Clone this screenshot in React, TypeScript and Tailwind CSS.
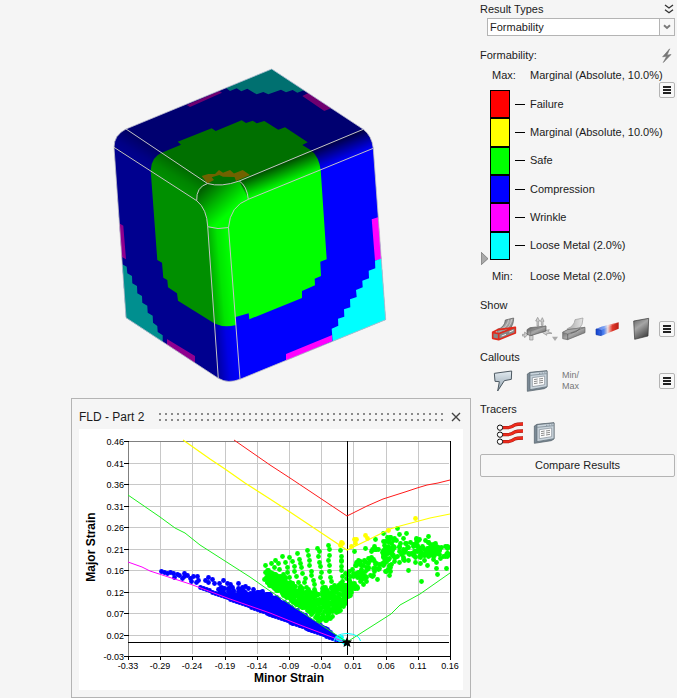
import type { ReactNode } from "react";

type Pt = [number, number];

const legend = [
  { label: "Failure", cell: "bg-[#ff0000]" },
  { label: "Marginal (Absolute, 10.0%)", cell: "bg-[#ffff00]" },
  { label: "Safe", cell: "bg-[#00ff00]" },
  { label: "Compression", cell: "bg-[#0000ff]" },
  { label: "Wrinkle", cell: "bg-[#ff00ff]" },
  { label: "Loose Metal (2.0%)", cell: "bg-[#00ffff]" },
];

/* ---------- 3D part ---------- */

const BODY =
  "M271.7 69L363.3 129.3Q372 136 373.3 148.3L385.7 319.7L240 379.3Q228 384 218.3 378.3L126 317.7L114 147.3Q114 135 126 129Z";

function PartView() {
  return (
    <svg viewBox="100 60 300 330" className="h-[330px] w-[300px]" role="img" aria-label="Formability result on part">
      <defs>
        <clipPath id="body">
          <path d={BODY} />
        </clipPath>
        <linearGradient id="rightBand" gradientUnits="userSpaceOnUse" x1="300" y1="155" x2="308" y2="175">
          <stop offset="0" stopColor="#000" stopOpacity="0.74" />
          <stop offset="0.35" stopColor="#000" stopOpacity="0.48" />
          <stop offset="1" stopColor="#000" stopOpacity="0" />
        </linearGradient>
        <linearGradient id="leftBand" gradientUnits="userSpaceOnUse" x1="167" y1="156" x2="156" y2="174">
          <stop offset="0" stopColor="#000" stopOpacity="0.6" />
          <stop offset="0.6" stopColor="#000" stopOpacity="0.48" />
          <stop offset="1" stopColor="#000" stopOpacity="0.44" />
        </linearGradient>
        <linearGradient id="frontBand" gradientUnits="userSpaceOnUse" x1="212" y1="300" x2="234" y2="298">
          <stop offset="0" stopColor="#000" stopOpacity="0.36" />
          <stop offset="0.5" stopColor="#000" stopOpacity="0.1" />
          <stop offset="1" stopColor="#000" stopOpacity="0" />
        </linearGradient>
        <linearGradient id="corner" gradientUnits="userSpaceOnUse" x1="206" y1="186" x2="230" y2="212">
          <stop offset="0" stopColor="#000" stopOpacity="0.62" />
          <stop offset="0.5" stopColor="#000" stopOpacity="0.3" />
          <stop offset="1" stopColor="#000" stopOpacity="0" />
        </linearGradient>
      </defs>
      <g clipPath="url(#body)">
        <rect x="100" y="60" width="300" height="330" fill="#00f" />
        <path
          fill="#0f0"
          d="M161.7 152.7L181 144.7L177.7 141.7L211.7 128.3L215.7 131L241.7 120.3L246 123L252.7 120.7L256.7 123.3L264.3 121L278.3 129.7L285 127.3L307.7 142.3L302.3 145L311.7 150.7Q319 157 320.7 170L326.7 259.3L320.3 261.7L321 276L314.7 278.7L315 285.3L302 291V298L249.3 319.3L248.7 313.3L235.6 317L236 325Q224 328 214.5 323.5L178 300.7L177 293.3L168 287.3L167.3 280L163.3 277.7L162 262.7L157.3 260L150.7 170.7Q151 157 161.7 152.7Z"
        />
        <path fill="#ffe000" d="M201.7 176L208.3 174H215L219 170L223 172.7L230 170L234 173.5L242.7 170L250 175L236 181L234.5 177L223 176.7L219.3 175L211.7 177.3L214 180L207.5 183.5Z" />
        <path fill="#f0f" d="M186.7 105L219.3 91L222 92.7L190 107ZM302.3 96L308.3 93L331 108.3L324.3 111ZM371.7 219.3L378.7 217L381.7 259L375 260.7ZM286 354L332.3 335V341L286 361ZM118 222.5L123.3 225.7L126 259.3L120 256ZM167 339L195 356V363L167 345.3Z" />
        <path fill="#0ff" d="M226 88L230 91L236.7 88.3L241.3 91.3L247.3 88.7L256.7 94.3L263.3 92L268.3 94.3L281 89.7L286 92.3L292.7 90L297.3 92.7L304 90.3L271.7 68Z" />
        <path fill="#0ff" d="M375 260.7L383 258L387 320L332.7 342L331.7 328.7L338.3 325.7L338 318.7L344.3 316.7L344 309.3L350.3 307.3L350 299.3L356.7 297L356 290L362.7 287.3L362.3 280.7L369 278.3L368.7 270.7L375.3 268.3Z" />
        <path fill="#0ff" d="M121 263.5L126.7 266.7L127.3 273.3L132 276L132.3 283.3L137 286L137.3 293.3L142 296L142.3 302.7L147.3 305.7L147.7 312.7L152.7 315.7L153 322.7L157.3 326L157.7 332L162.7 335.3V343L124 317.7Z" />
        <path fillOpacity="0.56" d="M126 129L271.7 69L363.3 129.3L239.3 181Q221 188 207.5 183.5Z" />
        <path fillOpacity="0.44" d="M110 144L196.7 200.7Q207 209 207.7 226.7L218.3 382L120 320Z" />
        <path fill="url(#rightBand)" d="M363.3 129.3L376 136V147.3L248.3 199.3L239.3 181Z" />
        <path fill="url(#leftBand)" d="M126 129L207.5 183.5Q197 188 196.7 200.7L110 144.7V129Z" />
        <path fill="url(#frontBand)" d="M207.7 226.7Q218 230 228.5 227.5L240 385H218.3Z" />
        <path fill="url(#corner)" d="M207.5 183.5Q221 188 239.3 181Q247 186 248.3 199.3Q232 204 228.5 227.5Q218 230 207.7 226.7Q207 209 196.7 200.7Q197 188 207.5 183.5Z" />
      </g>
      <g fill="none" stroke="#c4c4c4">
        <path strokeOpacity="0.8" d={BODY} />
        <path d="M126 129L207.5 183.5Q221 187.500 239.3 181L363.3 129.3M114 147.3L196.7 200.7Q207 209 207.7 226.7L218.3 378.3M228.500 227.5L240 379.3M373.3 148.3L248.3 199.3Q230 206 228.500 227.5Q218 230 207.7 226.7M207.5 183.5Q196 187 196.7 200.7M239.3 181Q247 186 248.3 199.3" />
      </g>
    </svg>
  );
}

/* ---------- forming limit diagram ---------- */

const yTicks = ["0.46", "0.41", "0.36", "0.31", "0.26", "0.21", "0.16", "0.12", "0.07", "0.02", "-0.03"];
const xTicks = ["-0.33", "-0.29", "-0.24", "-0.19", "-0.14", "-0.09", "-0.04", "0.01", "0.06", "0.11", "0.16"];
const yAt = (i: number) => Math.round(441 + i * 21.5);
const xAt = (i: number) => Math.round(128 + i * 32.2);

function makeRandom(seed: number) {
  let s = seed;
  return () => {
    s = (s * 1664525 + 1013904223) % 4294967296;
    return s / 4294967296;
  };
}

function levelAt(line: Pt[], x: number) {
  for (let i = 1; i < line.length; i++) {
    if (x <= line[i][0]) {
      const [x0, y0] = line[i - 1];
      const [x1, y1] = line[i];
      return y0 + ((y1 - y0) * (x - x0)) / (x1 - x0);
    }
  }
  return line[line.length - 1][1];
}

function safePoints(): Pt[] {
  const rnd = makeRandom(42);
  const pts: Pt[] = [];
  const tops: Pt[] = [
    [265, 566], [271, 562], [276, 559], [282, 557], [290, 556], [298, 553], [307, 550], [317, 547], [328, 545], [341, 550],
  ];
  const feet: Pt[] = [
    [277, 590], [286, 594], [293, 598], [300, 602], [306, 607], [312, 611], [319, 614], [326, 616], [333, 612], [342, 601],
  ];
  tops.forEach(([tx, ty], k) => {
    const [fx, fy] = feet[k];
    const steps = Math.round((fy - ty) / 5);
    for (let i = 0; i <= steps; i++) {
      const t = i / steps;
      pts.push([tx + (fx - tx) * t + rnd() * 2 - 1, ty + (fy - ty) * t + rnd() * 2 - 1]);
    }
  });
  const upperLeft: Pt[] = [[263, 567], [272, 572], [285, 577], [300, 585], [315, 589], [330, 586], [347, 580]];
  const lowerLeft: Pt[] = [[263, 578], [270, 586], [290, 600], [318, 620], [326, 621], [336, 614], [347, 602]];
  for (let i = 0; i < 420; i++) {
    const x = 264 + rnd() * 83;
    const a = levelAt(upperLeft, x);
    const b = levelAt(lowerLeft, x);
    pts.push([x, a + (b - a) * Math.pow(rnd(), 0.8)]);
  }
  const upperMid: Pt[] = [[343, 572], [352, 562], [362, 554], [372, 546], [383, 536], [397, 531]];
  const lowerMid: Pt[] = [[343, 602], [352, 593], [362, 586], [372, 582], [383, 576], [397, 569]];
  for (let i = 0; i < 130; i++) {
    const x = 343 + 48 * Math.pow(rnd(), 1.2);
    const a = levelAt(upperMid, x);
    const b = levelAt(lowerMid, x);
    pts.push([x, a + (b - a) * (0.06 + 0.94 * rnd())]);
  }
  const upperRight: Pt[] = [[382, 539], [397, 532], [410, 534], [430, 536], [450, 547]];
  const lowerRight: Pt[] = [[382, 574], [397, 570], [410, 567], [430, 562], [450, 559]];
  for (let i = 0; i < 150; i++) {
    const x = 382 + rnd() * 66;
    const a = levelAt(upperRight, x);
    const b = levelAt(lowerRight, x);
    const spread = (rnd() + rnd()) / 2;
    pts.push([x, a + (b - a) * spread]);
  }
  const singles: Pt[] = [
    [421, 581], [437, 574], [446, 568], [436, 568], [408, 570], [406, 533], [397, 528], [383, 533], [375, 539], [365, 548],
    [428, 536], [418, 540], [389, 575], [436, 562], [427, 565], [354, 551], [341, 560], [390, 567],
  ];
  return pts.concat(singles);
}

function compressionPoints(): Pt[] {
  const rnd = makeRandom(7);
  const pts: Pt[] = [
    [161, 571], [164, 572], [167, 573], [170, 572], [173, 573], [177, 574], [174, 577], [179, 575], [184, 573], [182, 578],
    [187, 575], [191, 581], [193, 576], [197, 576], [198, 580], [196, 582], [190, 578], [184, 576], [205, 580], [208, 577],
    [212, 579], [214, 583], [208, 582], [219, 583], [223, 580], [227, 583], [230, 584], [228, 588], [232, 587], [238, 583],
    [242, 587], [240, 590], [245, 586], [248, 588], [245, 592], [253, 589], [257, 592], [262, 591], [260, 595], [267, 594], [270, 594],
  ];
  for (let x = 200; x < 341; x += 3) pts.push([x, 587 + (x - 200) * 0.385]);
  const upper: Pt[] = [[215, 586], [238, 588], [262, 592], [272, 594], [300, 611], [343, 640]];
  const lower: Pt[] = [[215, 592], [238, 601], [270, 614], [300, 626], [343, 641]];
  for (let i = 0; i < 260; i++) {
    const x = 218 + rnd() * 112;
    const a = levelAt(upper, x);
    const b = levelAt(lower, x);
    pts.push([x, a + (b - a) * rnd()]);
  }
  return pts;
}

const safe = safePoints();
const compression = compressionPoints();
const marginal: Pt[] = [
  [341, 542], [340, 545], [342, 543], [356, 539], [354, 539], [355, 543], [351, 546], [365, 535], [367, 538], [388, 530], [415, 518],
];
const loose: Pt[] = [[337, 638], [340, 640], [343, 641], [345, 643], [341, 637]];

function Dots({ pts, color }: { pts: Pt[]; color: string }) {
  return (
    <g fill={color}>
      {pts.map(([x, y], i) => (
        <circle key={i} cx={Math.round(x) + 0.5} cy={Math.round(y) + 0.5} r="2.4" />
      ))}
    </g>
  );
}

function StrainChart() {
  return (
    <svg viewBox="79 429 384 261" className="block w-full bg-white font-['Liberation_Sans',sans-serif]" role="img" aria-label="Forming limit diagram">
      <g stroke="#c8c8c8" shapeRendering="crispEdges">
        {yTicks.map((t, i) => (
          <line key={t} x1="128" x2="449" y1={yAt(i) + 0.5} y2={yAt(i) + 0.5} />
        ))}
        {xTicks.map((t, i) => (
          <line key={t} y1="441" y2="654" x1={xAt(i) + 0.5} x2={xAt(i) + 0.5} />
        ))}
      </g>
      <Dots pts={safe} color="#00ff00" />
      <path fill="#0000ff" d="M235 593L262 592L275 596L300 611L346 641L332 638L270 615L235 600Z" />
      <Dots pts={compression} color="#0000ff" />
      <Dots pts={loose} color="#00ffff" />
      <Dots pts={marginal} color="#ffff00" />
      <g shapeRendering="crispEdges" fill="none">
        <path stroke="#808080" d="M128.500 656V441.500H450" />
        <path stroke="#000" d="M450.500 441V657M128 656.500H451M347.500 441V655M128 642.500H449" />
        {yTicks.map((t, i) => (
          <line key={t} x1="124" x2="129" y1={yAt(i) + 0.5} y2={yAt(i) + 0.5} stroke="#000" />
        ))}
        {xTicks.map((t, i) => (
          <line key={t} y1="656" y2="660" x1={xAt(i) + 0.5} x2={xAt(i) + 0.5} stroke="#000" />
        ))}
      </g>
      <g fill="none">
        <path stroke="#ff1a1a" d="M234 440L270 465L290 478L347 516L367 506L383 499L405 492L417 488L427 485L438 483L450 480" />
        <path stroke="#ff0" strokeWidth="1.2" d="M183 440L210 459L225 469L245 483L270 499L290 512L317 530L347 550L368 540L390 529L400 526L430 518L450 514" />
        <path stroke="#1ef01e" d="M128 495L160 517L175 528L185 533L200 545L250 577L270 591L347 642L391 614L400 605L420 594L450 573" />
        <path stroke="#f0f" d="M128 562L142 567L150 571L190 584L230 599L270 613L300 625L345 642" />
      </g>
      <path fill="none" stroke="#0ff" d="M334 641Q334 634 347 633.500Q359 634 360.500 641M335 637L346 642" />
      <path fill="#000" d="M347 637L348.500 640.500H352L349.500 643L350.500 647L347 645L343.500 647L344.500 643L342 640.500H345.500Z" />
      <g fontSize="9" fill="#000">
        {yTicks.map((t, i) => (
          <text key={t} x="124" y={yAt(i) + 4} textAnchor="end">
            {t}
          </text>
        ))}
        {xTicks.map((t, i) => (
          <text key={t} x={xAt(i)} y="669" textAnchor="middle">
            {t}
          </text>
        ))}
      </g>
      <g fontSize="12" fontWeight="700" textAnchor="middle">
        <text x="289" y="682">
          Minor Strain
        </text>
        <text transform="translate(95 547) rotate(-90)">Major Strain</text>
      </g>
    </svg>
  );
}

/* ---------- icons ---------- */

function Glyph({ box, className, children }: { box: string; className: string; children: ReactNode }) {
  return (
    <svg viewBox={box} className={"shrink-0 " + className} aria-hidden="true">
      {children}
    </svg>
  );
}

function Shades() {
  return (
    <svg className="absolute size-0" aria-hidden="true">
      <defs>
        <linearGradient id="steel" x1="0" y1="0" x2="1" y2="1">
          <stop offset="0" stopColor="#4a4a4a" />
          <stop offset="0.5" stopColor="#a8a8a8" />
          <stop offset="1" stopColor="#4c4c4c" />
        </linearGradient>
        <linearGradient id="pale" x1="0" y1="0" x2="1" y2="0">
          <stop offset="0" stopColor="#a8a8a8" />
          <stop offset="1" stopColor="#e4e4e4" />
        </linearGradient>
        <linearGradient id="plate" x1="0" y1="0" x2="0.5" y2="1">
          <stop offset="0" stopColor="#606060" />
          <stop offset="0.45" stopColor="#a6a6a6" />
          <stop offset="1" stopColor="#4a4a4a" />
        </linearGradient>
        <linearGradient id="heat" x1="0" y1="0" x2="1" y2="0">
          <stop offset="0" stopColor="#0f3fd0" />
          <stop offset="0.35" stopColor="#4f83f0" />
          <stop offset="0.52" stopColor="#eedada" />
          <stop offset="0.72" stopColor="#e0392b" />
          <stop offset="1" stopColor="#b81c12" />
        </linearGradient>
        <linearGradient id="glass" x1="0" y1="0" x2="0" y2="1">
          <stop offset="0" stopColor="#e3ebf1" />
          <stop offset="1" stopColor="#8fa0ac" />
        </linearGradient>
      </defs>
    </svg>
  );
}

function NoteIcon() {
  return (
    <g>
      <path fill="#7b8a96" stroke="#4d5962" strokeWidth="2" d="M172 252L180 247L231 242V291L223 296L172 304Z" />
      <path fill="#c9d4dc" stroke="#5a6670" strokeWidth="2" d="M180 248L231 243V290L180 299Z" />
      <path stroke="#6c7a85" strokeWidth="2" d="M181 256L230 251M207 250h4M215 249h4M223 248h3" />
      <path fill="#fbfbfb" stroke="#7b8791" strokeWidth="2" d="M187 263L224 258V284L187 290Z" />
      <path stroke="#555" strokeWidth="2" d="M192 269L203 267M192 275L203 273M192 281L203 279M207 267L219 265M207 273L219 271M207 279L219 277" />
    </g>
  );
}

function MenuButton({ label }: { label: string }) {
  return (
    <button type="button" aria-label={label} className="flex size-4 shrink-0 flex-col items-center justify-center gap-px rounded-xs border border-[#b4b4b4] bg-[#f7f7f7]">
      <span className="h-0.5 w-2 bg-[#222]" />
      <span className="h-0.5 w-2 bg-[#222]" />
      <span className="h-0.5 w-2 bg-[#222]" />
    </button>
  );
}

function Heading({ children, className }: { children: ReactNode; className: string }) {
  return <h2 className={"flex h-[18px] items-center justify-between " + className}>{children}</h2>;
}

function ResultPanel() {
  return (
    <aside className="w-[197px] shrink-0 pr-0.5 text-[11px] leading-none text-[#1b1b1b]">
      <Shades />
      <div className="flex h-[18px] items-center justify-between">
        <label htmlFor="result-type">Result Types</label>
        <button type="button" aria-label="Collapse" className="mr-px">
          <Glyph box="0 0 30 36" className="h-3 w-2.5">
            <path fill="none" stroke="#333" strokeWidth="4" d="M3 6L15 15L27 6M3 20L15 29L27 20" />
          </Glyph>
        </button>
      </div>
      <div className="relative ml-[7px]">
        <select id="result-type" defaultValue="Formability" className="h-[18px] w-full appearance-none border border-[#b4b4b4] bg-white pl-[2px] outline-none">
          <option>Formability</option>
        </select>
        <span className="pointer-events-none absolute inset-y-0 right-0 flex w-4 items-center justify-center border border-[#b4b4b4] bg-[#f7f7f7]">
          <Glyph box="0 0 24 18" className="h-1.5 w-2">
            <path fill="none" stroke="#7a7a7a" strokeWidth="6" d="M3 4L12 12L21 4" />
          </Glyph>
        </span>
      </div>

      <Heading className="mt-2.5">
        <span>Formability:</span>
        <Glyph box="577 143 30 44" className="mr-[3px] h-[15px] w-2.5">
          <path fill="#777" stroke="#777" strokeWidth="2" d="M600 145L579 169L591 167L581 186L604 162L592 164Z" />
        </Glyph>
      </Heading>
      <dl className="mt-0.5 flex h-[18px] items-center pl-3">
        <dt className="w-[38px]">Max:</dt>
        <dd className="whitespace-nowrap">Marginal (Absolute, 10.0%)</dd>
      </dl>
      <div className="mt-1.5 flex h-[171px]">
        <div className="flex w-2.5 shrink-0 items-end pl-px">
          <Glyph box="0 0 24 39" className="-mb-1 h-[13px] w-2">
            <path fill="#aaa" stroke="#666" strokeWidth="2" d="M1 1L21 20L1 38Z" />
          </Glyph>
        </div>
        <ul className="flex grow flex-col border-b border-transparent">
          {legend.map((row) => (
            <li key={row.label} className="flex grow items-center">
              <span className={"w-5 self-stretch border border-black " + row.cell} />
              <span className="mx-[5px] h-px w-2.5 bg-black" />
              <span className="w-0 whitespace-nowrap">{row.label}</span>
            </li>
          ))}
        </ul>
        <div className="-mt-2">
          <MenuButton label="Legend options" />
        </div>
      </div>
      <dl className="mt-1.5 flex h-[18px] items-center pl-3">
        <dt className="w-[38px]">Min:</dt>
        <dd>Loose Metal (2.0%)</dd>
      </dl>

      <Heading className="mt-[11px]">Show</Heading>
      <div className="mt-[3px] flex h-6 items-center gap-1 pl-[11px]">
        <button type="button" aria-label="Deformed shape with outline">
          <Glyph box="63 81 81 72" className="h-6 w-[27px]">
            <path fill="url(#steel)" stroke="#555" strokeWidth="2" d="M82 118Q104 112 106 90L131 84Q131 106 118 118L84 132Z" />
            <path fill="none" stroke="#ddd" strokeWidth="2" d="M92 120Q112 110 116 89M103 121Q122 110 125 88" />
            <path fill="#888" stroke="#e02a1c" strokeWidth="5" strokeLinejoin="round" d="M68 127L83 119L136 112V129L86 149L68 145ZM68 127L86 131L136 112M86 131V149" />
            <path fill="none" stroke="#eee" strokeWidth="3" d="M95 138L108 133M118 126L130 121" />
          </Glyph>
        </button>
        <button type="button" aria-label="Loads">
          <Glyph box="156 81 108 72" className="h-6 w-9">
            <path fill="#d0d0d0" stroke="#8c8c8c" strokeWidth="2" d="M201 108V93L197 93L203 82L209 93H206V108ZM214 106V94H211L217 83L222 94H219V106ZM179 136V150H189V136ZM157 133H164V126L173 134L164 143V138H157ZM220 123L238 119L234 125L246 130L230 131V136L218 128Z" />
            <path fill="url(#steel)" stroke="#555" strokeWidth="2" d="M171 119L180 113L228 108V123L182 137L171 133Z" />
            <path fill="none" stroke="#777" strokeWidth="2" d="M171 119L182 122L228 108M182 122V137" />
            <path fill="#aaa" d="M246 140H264L255 153Z" />
          </Glyph>
        </button>
        <button type="button" aria-label="Undeformed shape">
          <Glyph box="274 81 78 72" className="h-6 w-[26px]">
            <path fill="url(#pale)" stroke="#999" strokeWidth="2" d="M290 116Q311 108 313 89L337 84Q338 104 324 119L292 130Z" />
            <path fill="url(#steel)" stroke="#666" strokeWidth="2" d="M276 127L291 119L343 112V128L291 149L276 146Z" />
            <path fill="#a8a8a8" stroke="#777" strokeWidth="2" d="M276 127L291 119L343 112L291 132Z" />
            <path fill="none" stroke="#555" strokeWidth="2" d="M291 132V149M300 130Q318 127 328 116" />
          </Glyph>
        </button>
        <button type="button" aria-label="Contour">
          <Glyph box="366 81 84 72" className="h-6 w-7">
            <path fill="url(#heat)" d="M378 117L394 110L446 97V116L395 137L378 134Z" />
            <path fill="#fff" fillOpacity="0.25" d="M378 117L394 110L446 97L393 121Z" />
            <path fill="none" stroke="#1a3fa8" strokeWidth="2" d="M378 117L393 121V136M378 117V134L394 137" />
          </Glyph>
        </button>
        <button type="button" aria-label="Plate">
          <Glyph box="462 81 93 72" className="h-6 w-[31px]">
            <path fill="url(#plate)" stroke="#333" strokeWidth="2" d="M491 93L536 85L534 138L494 148Z" />
          </Glyph>
        </button>
        <MenuButton label="Show options" />
      </div>

      <Heading className="mt-[7px]">Callouts</Heading>
      <div className="mt-[3px] flex h-6 items-center gap-1 pl-[11px]">
        <button type="button" aria-label="Add callout">
          <Glyph box="63 237 81 72" className="h-6 w-[27px]">
            <path fill="url(#glass)" stroke="#4d5962" strokeWidth="3" strokeLinejoin="round" d="M73 250L125 243L124 268L103 272L83 303L88 275L75 274Z" />
          </Glyph>
        </button>
        <button type="button" aria-label="Callout table">
          <Glyph box="156 237 90 72" className="h-6 w-[30px]">
            <NoteIcon />
          </Glyph>
        </button>
        <button type="button" className="ml-1.5 text-left text-[9px] leading-[11px] text-[#777]">
          Min/
          <br />
          Max
        </button>
        <div className="ml-auto">
          <MenuButton label="Callout options" />
        </div>
      </div>

      <Heading className="mt-[7px]">Tracers</Heading>
      <div className="mt-[3px] flex h-6 items-center gap-2 pl-4">
        <button type="button" aria-label="Tracers">
          <Glyph box="78 393 84 72" className="h-6 w-7">
            <g fill="none" stroke="#9c1c12" strokeWidth="10">
              <path d="M94 413H112Q124 413 134 405Q140 402 159 402M94 434H112Q124 434 134 426Q140 423 159 423M94 455H112Q124 455 134 447Q140 444 159 444" />
              <path stroke="#ee2a1c" strokeWidth="7" d="M94 413H112Q124 413 134 405Q140 402 159 402M94 434H112Q124 434 134 426Q140 423 159 423M94 455H112Q124 455 134 447Q140 444 159 444" />
            </g>
            <g fill="#fff" stroke="#111" strokeWidth="3">
              <circle cx="90" cy="413" r="8" />
              <circle cx="90" cy="434" r="8" />
              <circle cx="90" cy="455" r="8" />
            </g>
          </Glyph>
        </button>
        <button type="button" aria-label="Tracer table">
          <Glyph box="165 237 72 72" className="size-6">
            <NoteIcon />
          </Glyph>
        </button>
      </div>
      <button type="button" className="mt-[9px] h-[23px] w-full rounded-xs border border-[#b4b4b4] bg-[#f7f7f7]">
        Compare Results
      </button>
    </aside>
  );
}

export default function App() {
  return (
    <main className="flex min-h-screen gap-[9px] bg-[#f5f5f5] font-['Liberation_Sans',Arial,sans-serif]">
      <div className="flex min-w-0 grow flex-col">
        <div className="pl-[100px] pt-[60px]">
          <PartView />
        </div>
        <section className="ml-[71px] mt-2 grow border border-[#b4b4b4] px-[7px] pb-[7px]">
          <header className="flex h-[30px] items-center pt-1.5">
            <h2 className="w-20 shrink-0 text-[12px] leading-none text-[#1b1b1b]">FLD - Part 2</h2>
            <svg className="h-2 w-0 grow" aria-hidden="true">
              <defs>
                <pattern id="grip" width="6" height="6" patternUnits="userSpaceOnUse">
                  <rect width="2" height="2" fill="#8a8a8a" />
                </pattern>
              </defs>
              <rect width="100%" height="8" fill="url(#grip)" />
            </svg>
            <button type="button" aria-label="Close" className="ml-2 mr-0.5">
              <svg viewBox="0 0 10 10" className="size-2.5" aria-hidden="true">
                <path d="M1 1L9 9M9 1L1 9" stroke="#444" strokeWidth="1.400" />
              </svg>
            </button>
          </header>
          <StrainChart />
        </section>
      </div>
      <ResultPanel />
    </main>
  );
}
